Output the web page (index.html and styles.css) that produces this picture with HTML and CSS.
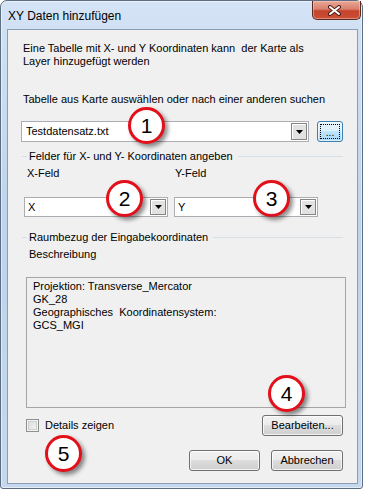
FILE: index.html
```html
<!DOCTYPE html>
<html lang="de">
<head>
    <meta charset="UTF-8">
    <meta name="viewport" content="width=device-width, initial-scale=1.0">
    <title>XY Daten hinzufügen</title>
    <link rel="stylesheet" href="styles.css">
</head>
<body>
    <div class="window">
        <div class="titlebar">
            <span class="title">XY Daten hinzufügen</span>
            <div class="close-button">
                <svg width="13" height="11" viewBox="0 0 13 11">
                    <path d="M2 2 L11 9 M11 2 L2 9" stroke="#4b1e17" stroke-width="4" stroke-linecap="round"/>
                    <path d="M2 2 L11 9 M11 2 L2 9" stroke="#fff" stroke-width="2" stroke-linecap="round"/>
                </svg>
            </div>
        </div>
        <div class="client">
            <p class="intro">Eine Tabelle mit X- und Y Koordinaten kann&nbsp; der Karte als<br>Layer hinzugefügt werden</p>
            <p class="source-label">Tabelle aus Karte auswählen oder nach einer anderen suchen</p>
            <div class="source-row">
                <div class="combo source-combo">
                    <span class="combo-text">Testdatensatz.txt</span>
                    <span class="drop-button"><svg width="7" height="4" viewBox="0 0 7 4"><polygon points="0,0 7,0 3.5,4" fill="#000"/></svg></span>
                </div>
                <button class="browse-button" type="button"><span class="focus-rect">...</span></button>
            </div>

            <div class="group-header">
                <span class="line-start"></span>
                <span class="group-title">Felder für X- und Y- Koordinaten angeben</span>
                <span class="line-rest"></span>
            </div>
            <div class="field-labels">
                <span class="x-label">X-Feld</span>
                <span>Y-Feld</span>
            </div>
            <div class="field-row">
                <div class="combo field-combo">
                    <span class="combo-text">X</span>
                    <span class="drop-button"><svg width="7" height="4" viewBox="0 0 7 4"><polygon points="0,0 7,0 3.5,4" fill="#000"/></svg></span>
                </div>
                <div class="combo field-combo">
                    <span class="combo-text">Y</span>
                    <span class="drop-button"><svg width="7" height="4" viewBox="0 0 7 4"><polygon points="0,0 7,0 3.5,4" fill="#000"/></svg></span>
                </div>
            </div>

            <div class="group-header">
                <span class="line-start"></span>
                <span class="group-title">Raumbezug der Eingabekoordinaten</span>
                <span class="line-rest"></span>
            </div>
            <div class="desc-label">Beschreibung</div>
            <div class="description">Projektion: Transverse_Mercator<br>GK_28<br>Geographisches&nbsp; Koordinatensystem:<br>GCS_MGI</div>

            <div class="details-row">
                <label class="checkbox-label"><span class="checkbox"></span>Details zeigen</label>
                <button class="button edit-button" type="button">Bearbeiten...</button>
            </div>
            <div class="button-row">
                <button class="button ok-button" type="button">OK</button>
                <button class="button cancel-button" type="button">Abbrechen</button>
            </div>

            <span class="badge badge-1">1</span>
            <span class="badge badge-2">2</span>
            <span class="badge badge-3">3</span>
            <span class="badge badge-4">4</span>
            <span class="badge badge-5">5</span>
        </div>
    </div>
</body>
</html>
```

FILE: styles.css
```css
* {
    box-sizing: border-box;
}
body {
    margin: 0;
    background-color: #fff;
    font-family: "Liberation Sans", Arial, sans-serif;
    font-size: 11px;
    color: #000;
}
p {
    margin: 0;
}
button {
    font: inherit;
    color: inherit;
    padding: 0;
}

/* window frame */
.window {
    width: 363px;
    height: 489px;
    border: 1px solid #5d6d82;
    border-radius: 7px 7px 3px 3px;
    background: linear-gradient(180deg, #d4e3f5 0%, #bed3ec 45%, #c5d8ee 100%);
    box-shadow: inset 0 0 0 1px rgba(255, 255, 255, 0.5);
}
.titlebar {
    display: flex;
    height: 28px;
    padding-left: 7px;
}
.title {
    align-self: center;
    margin-top: 1px;
    font-size: 12px;
}
.close-button {
    display: flex;
    justify-content: center;
    align-items: center;
    margin-left: auto;
    margin-right: 1px;
    padding-right: 5px;
    width: 49px;
    height: 19px;
    border: 1px solid #5a2a22;
    border-top: none;
    border-radius: 0 0 5px 5px;
    background: linear-gradient(180deg, #e8a897 0%, #d9806d 45%, #c4432c 55%, #cc4f36 100%);
    box-shadow: inset 0 0 0 1px rgba(255, 210, 200, 0.45);
}

/* client area */
.client {
    position: relative;
    width: 351px;
    height: 455px;
    margin-left: 6px;
    padding: 0 14px 0 13px;
    border: 1px solid #8a9db5;
    background-color: #f0f0f0;
    line-height: 13px;
}
.intro {
    margin-top: 12px;
    margin-left: 2px;
}
.source-label {
    margin-top: 25px;
    margin-left: 2px;
}
.source-row {
    display: flex;
    align-items: center;
    gap: 8px;
    height: 21px;
    margin-top: 15px;
}

.combo {
    display: flex;
    align-items: center;
    height: 21px;
    padding: 1px;
    border: 1px solid #abadb3;
    background-color: #fff;
}
.combo-text {
    flex: 1;
    padding-left: 3px;
}
.source-combo {
    flex: 1;
}
.drop-button {
    display: flex;
    justify-content: center;
    align-items: center;
    width: 16px;
    height: 17px;
    border: 1px solid #858585;
    background-color: #e2e2e2;
    box-shadow: inset 1px 1px 0 #fff;
}
.drop-button svg {
    display: block;
}

.browse-button {
    width: 26px;
    height: 21px;
    padding: 2px;
    border: 1px solid #3c7fb1;
    border-radius: 3px;
    background: linear-gradient(180deg, #eaf6fd 0%, #d9f0fc 49%, #bee6fd 50%, #a7d9f5 100%);
    box-shadow: inset 0 0 0 1px rgba(255, 255, 255, 0.6);
}
.focus-rect {
    display: flex;
    justify-content: center;
    align-items: flex-end;
    height: 100%;
    border: 1px dotted #000;
    font-size: 10px;
    line-height: 10px;
}

/* group headers */
.group-header {
    display: flex;
    align-items: center;
    height: 13px;
    margin-top: 8px;
}
.group-header + .desc-label {
    margin-top: 4px;
}
.line-start {
    width: 5px;
    height: 1px;
    margin-left: 1px;
    margin-right: 2px;
    background-color: #d5dfe5;
}
.line-rest {
    flex: 1;
    height: 1px;
    margin-left: 5px;
    background-color: #d5dfe5;
}

.field-labels {
    display: flex;
    margin-top: 4px;
    padding-left: 6px;
}
.x-label {
    width: 148px;
}
.field-row {
    display: flex;
    gap: 6px;
    margin-top: 17px;
    margin-left: 3px;
}
.field-combo {
    width: 144px;
    height: 20px;
}
.field-combo .drop-button {
    height: 16px;
}
.field-combo .combo-text {
    padding-left: 2px;
}
.field-row + .group-header {
    margin-top: 14px;
}

.desc-label {
    margin-left: 8px;
}
.description {
    width: 320px;
    height: 131px;
    margin-top: 16px;
    margin-left: 5px;
    padding: 2px 6px;
    border: 1px solid #a5a5a5;
}

/* bottom rows */
.details-row {
    display: flex;
    justify-content: space-between;
    align-items: center;
    margin-top: 7px;
}
.checkbox-label {
    display: flex;
    align-items: center;
    margin-left: 5px;
}
.checkbox {
    width: 13px;
    height: 13px;
    margin-right: 6px;
    border: 1px solid #8e8f8f;
    background: linear-gradient(135deg, #d8d8d8 0%, #f6f6f6 100%);
    box-shadow: inset 0 0 0 1px #f4f4f4, inset 0 0 0 2px #cfcfcf;
}
.button {
    height: 21px;
    border: 1px solid #707070;
    border-radius: 3px;
    background: linear-gradient(180deg, #f2f2f2 0%, #ebebeb 49%, #dddddd 50%, #cfcfcf 100%);
    box-shadow: inset 0 0 0 1px rgba(255, 255, 255, 0.75);
}
.edit-button {
    width: 81px;
}
.button-row {
    display: flex;
    justify-content: flex-end;
    gap: 11px;
    margin-top: 14px;
}
.ok-button {
    width: 71px;
}
.cancel-button {
    width: 72px;
}

/* numbered callouts */
.badge {
    position: absolute;
    display: flex;
    justify-content: center;
    align-items: center;
    width: 37px;
    height: 37px;
    border: 3px solid #e3101b;
    border-radius: 50%;
    background-color: #fff;
    box-shadow: 3px 3px 4px rgba(0, 0, 0, 0.45);
    font-size: 21px;
    line-height: 1;
}
.badge-1 { left: 120px; top: 77px; }
.badge-2 { left: 98px; top: 150px; }
.badge-3 { left: 245px; top: 150px; }
.badge-4 { left: 260px; top: 345px; }
.badge-5 { left: 37px; top: 405px; }
```
